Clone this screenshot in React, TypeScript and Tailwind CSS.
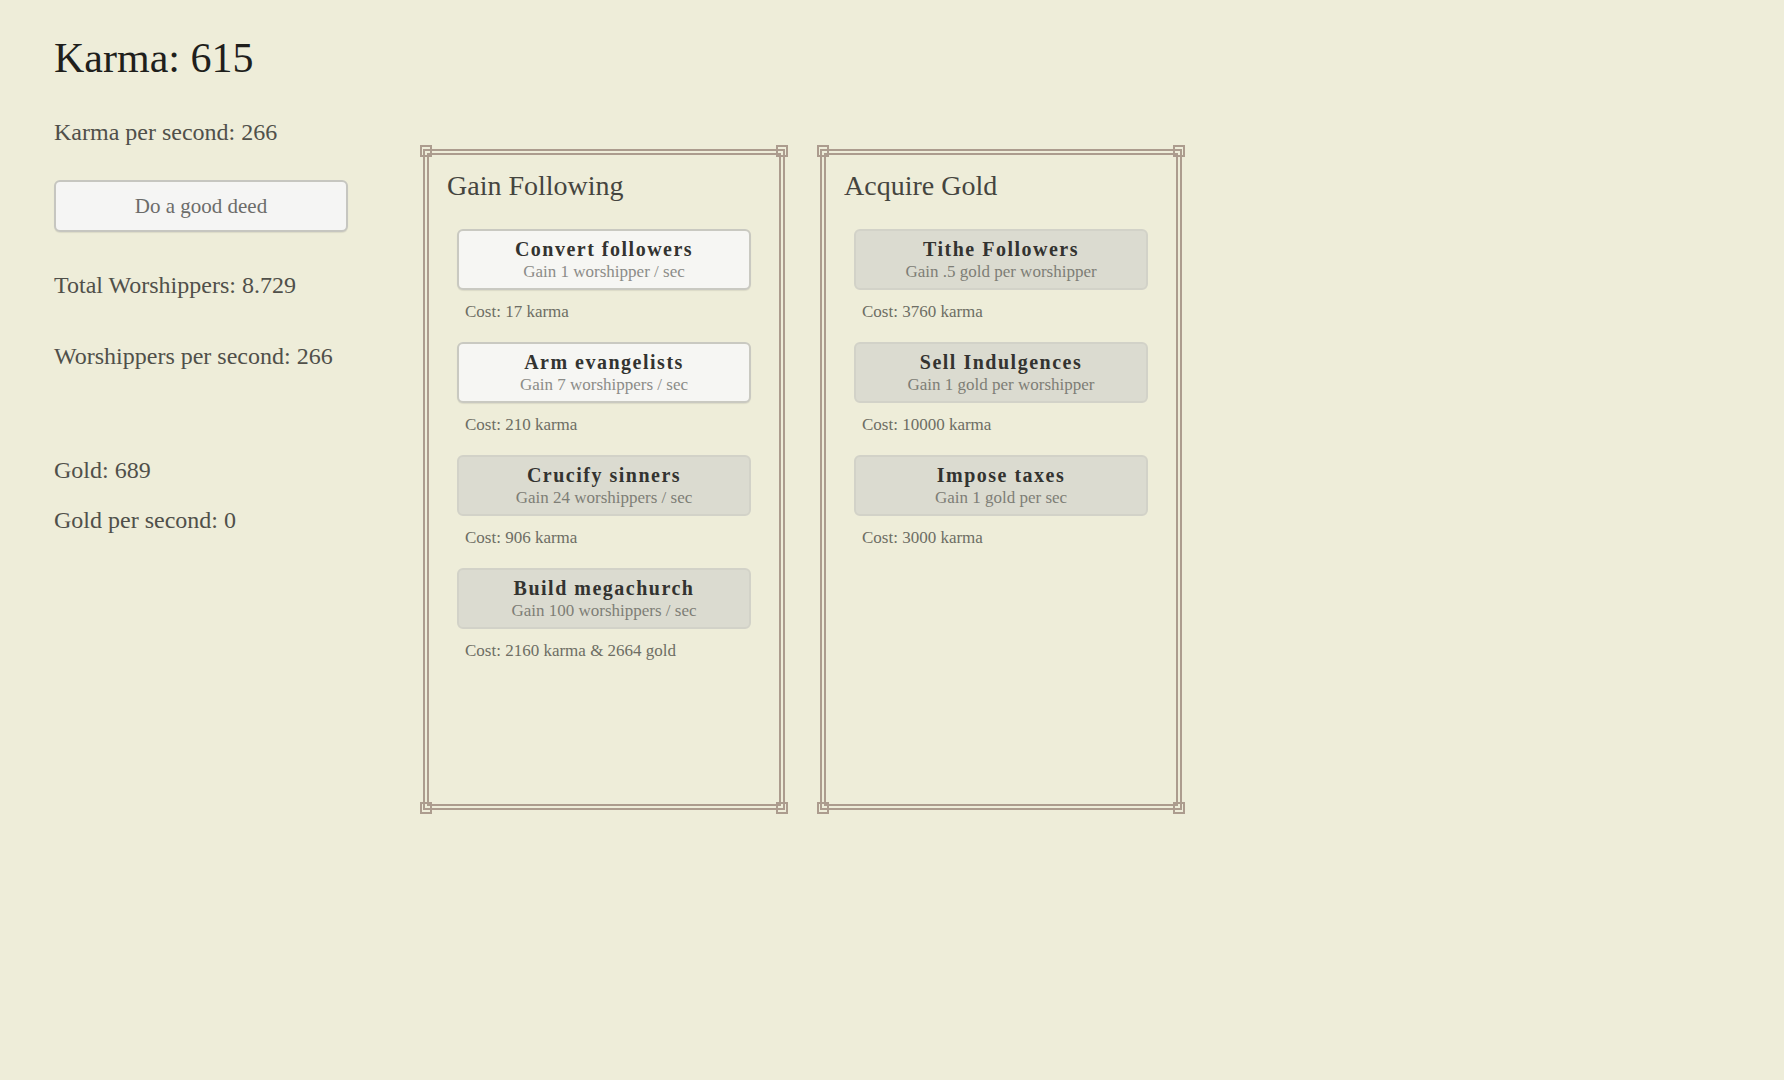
import React from 'react';

type Upgrade = {
  name: string;
  gain: string;
  cost: string;
  affordable: boolean;
};

const FOLLOWING: Upgrade[] = [
  { name: 'Convert followers', gain: 'Gain 1 worshipper / sec', cost: 'Cost: 17 karma', affordable: true },
  { name: 'Arm evangelists', gain: 'Gain 7 worshippers / sec', cost: 'Cost: 210 karma', affordable: true },
  { name: 'Crucify sinners', gain: 'Gain 24 worshippers / sec', cost: 'Cost: 906 karma', affordable: false },
  { name: 'Build megachurch', gain: 'Gain 100 worshippers / sec', cost: 'Cost: 2160 karma & 2664 gold', affordable: false },
];

const GOLD: Upgrade[] = [
  { name: 'Tithe Followers', gain: 'Gain .5 gold per worshipper', cost: 'Cost: 3760 karma', affordable: false },
  { name: 'Sell Indulgences', gain: 'Gain 1 gold per worshipper', cost: 'Cost: 10000 karma', affordable: false },
  { name: 'Impose taxes', gain: 'Gain 1 gold per sec', cost: 'Cost: 3000 karma', affordable: false },
];

// little square knots sitting on each corner of the framed panels
function Corner({ pos }: { pos: string }) {
  return <span className={`absolute h-[12px] w-[12px] border-2 border-[#ac9c8e] ${pos}`} />;
}

function UpgradeRow({ u }: { u: Upgrade }) {
  return (
    <div className="mb-[22px]">
      <button
        className={
          u.affordable
            ? 'flex w-full flex-col items-center rounded-[6px] border-2 border-[#c9c9c1] bg-[#f6f6f3] pt-[7px] pb-[6px] shadow-[0_1px_1px_rgba(0,0,0,0.08)]'
            : 'flex w-full flex-col items-center rounded-[6px] border-2 border-[#d2d2c8] bg-[#dbdbd0] pt-[7px] pb-[6px]'
        }
      >
        <span className="text-[20px] leading-[22px] font-bold tracking-[1.5px] text-[#333330]">{u.name}</span>
        <span
          className={
            u.affordable
              ? 'mt-[2px] text-[17px] leading-[20px] text-[#8c8c88]'
              : 'mt-[2px] text-[17px] leading-[20px] text-[#7e7e76]'
          }
        >
          {u.gain}
        </span>
      </button>
      <p className="mt-[13px] ml-[8px] text-[17px] leading-[17px] text-[#6d6d64]">{u.cost}</p>
    </div>
  );
}

function Panel({ title, items }: { title: string; items: Upgrade[] }) {
  return (
    <section className="relative h-[661px] w-[362px] border-[6px] border-double border-[#ac9c8e] px-[28px] pt-[17px]">
      <Corner pos="-left-[9px] -top-[10px]" />
      <Corner pos="-right-[9px] -top-[10px]" />
      <Corner pos="-left-[9px] -bottom-[10px]" />
      <Corner pos="-right-[9px] -bottom-[10px]" />
      <h2 className="-ml-[10px] text-[28px] leading-[27px] text-[#45453f]">{title}</h2>
      <div className="mt-[30px]">
        {items.map((u) => (
          <UpgradeRow key={u.name} u={u} />
        ))}
      </div>
    </section>
  );
}

export default function App() {
  return (
    <div
      className="flex min-h-screen items-start bg-[#eeedd9] pl-[54px]"
      style={{ fontFamily: '"Liberation Serif", "Times New Roman", serif' }}
    >
      <aside className="w-[369px] shrink-0 pt-[37px]">
        <h1 className="text-[42px] leading-[42px] text-[#1f1f1c]">Karma: 615</h1>
        <p className="mt-[41px] text-[24px] leading-[24px] text-[#50504a]">Karma per second: 266</p>
        <button className="mt-[36px] flex h-[52px] w-[294px] items-center justify-center rounded-[6px] border-2 border-[#c6c6c0] bg-[#f5f5f4] text-[21px] leading-[21px] text-[#6c6c6a] shadow-[0_1px_1px_rgba(0,0,0,0.08)]">
          Do a good deed
        </button>
        <p className="mt-[41px] text-[24px] leading-[24px] text-[#50504a]">Total Worshippers: 8.729</p>
        <p className="mt-[47px] text-[24px] leading-[24px] text-[#50504a]">Worshippers per second: 266</p>
        <p className="mt-[90px] text-[24px] leading-[24px] text-[#50504a]">Gold: 689</p>
        <p className="mt-[26px] text-[24px] leading-[24px] text-[#50504a]">Gold per second: 0</p>
      </aside>
      <div className="mt-[149px] flex gap-[35px]">
        <Panel title="Gain Following" items={FOLLOWING} />
        <Panel title="Acquire Gold" items={GOLD} />
      </div>
    </div>
  );
}
